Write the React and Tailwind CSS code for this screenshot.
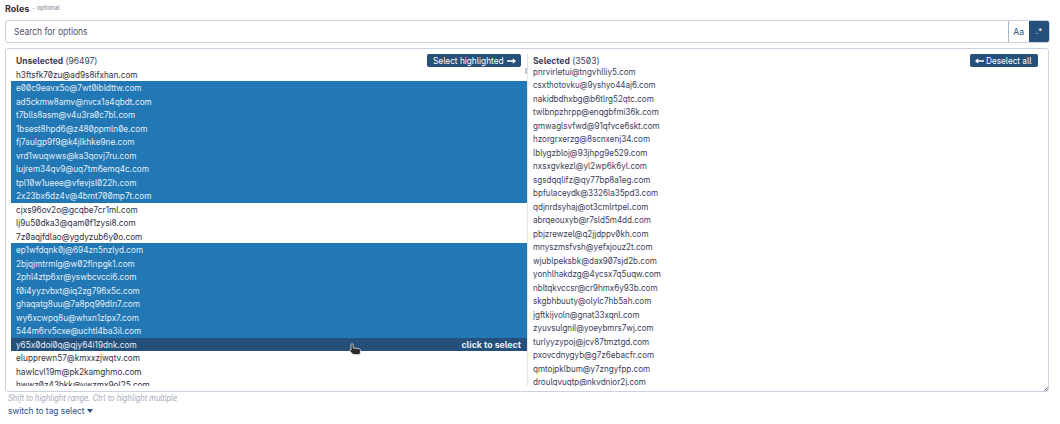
const unselected = [
  ['h3ftsfk70zu@ad9s8ifxhan.com', 0],
  ['e00c9eavx5o@7wt0ibldttw.com', 1],
  ['ad5ckmw8amv@nvcx1a4qbdt.com', 1],
  ['t7blls8asm@v4u3ra0c7bl.com', 1],
  ['1bsest8hpd6@z480ppmln0e.com', 1],
  ['fj7aulgp9f9@k4jlkhke9ne.com', 1],
  ['vrd1wuqwws@ka3qovj7ru.com', 1],
  ['lujrem34qv9@uq7tm6emq4c.com', 1],
  ['tpl10w1ueee@vfevjsl022h.com', 1],
  ['2x23bx6dz4v@4bmt700mp7t.com', 1],
  ['cjxs96ov2o@gcqbe7cr1ml.com', 0],
  ['lj9u50dka3@qam0f1zysi8.com', 0],
  ['7z0aqjfdlao@ygdyzub6y0o.com', 0],
  ['ep1wfdqnk0j@694zn5nzlyd.com', 1],
  ['2bjqjmtrmlg@w02flnpgk1.com', 1],
  ['2phl4ztp6xr@yswbcvcci6.com', 1],
  ['f0i4yyzvbxt@iq2zg796x5c.com', 1],
  ['ghaqatg8uu@7a8pq99dln7.com', 1],
  ['wy6xcwpq8u@whxn1zlpx7.com', 1],
  ['544m6rv5cxe@uchtl4ba3il.com', 1],
  ['y65x0doi0q@qjy64i19dnk.com', 2],
  ['elupprewn57@kmxxzjwqtv.com', 0],
  ['hawlcvl19m@pk2kamghmo.com', 0],
  ['hwwz0z43hkk@vwzmx9ol25.com', 0],
];

const selected = [
  'pnrvirletui@tngvhlliy5.com',
  'csxthotovku@9yshyo44aj6.com',
  'nakidbdhxbg@b6tlrg52qtc.com',
  'twlbnpzhrpp@enqgbfmi36k.com',
  'gmwaglsvfwd@91qfvce6skt.com',
  'hzorgrxerzg@8scnxenj34.com',
  'lblygzbloj@93jhpg9e529.com',
  'nxsxgvkezl@yl2wp6k6yl.com',
  'sgsdqqlifz@qy77bp8a1eg.com',
  'bpfulaceydk@3326la35pd3.com',
  'qdjnrdsyhaj@ot3cmlrtpel.com',
  'abrqeouxyb@r7sld5m4dd.com',
  'pbjzrewzel@q2jjdppv0kh.com',
  'mnyszmsfvsh@yefxjouz2t.com',
  'wjublpeksbk@dax907sjd2b.com',
  'yonhlhakdzg@4ycsx7q5uqw.com',
  'nbltqkvccsr@cr9hmx6y93b.com',
  'skgbhbuuty@olylc7hb5ah.com',
  'jgftkijvoln@gnat33xqnl.com',
  'zyuvsulgnil@yoeybmrs7wj.com',
  'turlyyzypoj@jcv87tmztgd.com',
  'pxovcdnygyb@g7z6ebacfr.com',
  'qmtojpklbum@y7zngyfpp.com',
  'droulqvuqtp@nkvdnior2j.com',
];

const rowStyles = [
  'text-[#2f3045]',
  'bg-[#2178b5] text-[#e3eef7]',
  'z-10 bg-[#25507a] text-[#e3eef7]',
];

const narrow = 'inline-block w-max origin-left whitespace-nowrap';

function Arrow({ left }) {
  return (
    <svg className={left ? 'h-2 w-[9px] shrink-0 rotate-180' : 'h-2 w-[9px] shrink-0'} viewBox="0 0 9 8" fill="currentColor">
      <path d="M0 3.3h5.8V1.3L9 4 5.8 6.7V4.7H0z" />
    </svg>
  );
}

function Pointer() {
  return (
    <svg className="absolute top-[5px] left-[338px] h-[13px] w-[13px]" viewBox="0 0 13 13">
      <path
        d="M3 .7c.8 0 1.2.5 1.2 1.2v3l5.6.8c1.2.2 1.8.8 1.7 2l-.5 3.9H4.2L.8 8.2c-.6-.8.4-1.7 1.2-1.1V1.9C2 1.2 2.3.7 3 .7z"
        fill="#2b2b2b"
        stroke="#e4e7ea"
        strokeWidth=".8"
      />
    </svg>
  );
}

export default function App() {
  return (
    <main className="h-[424px] w-[1060px] overflow-hidden bg-white pl-[5px] font-['Inter',sans-serif] text-[8.8px] leading-[13.5px] text-[#3a3e58] [font-feature-settings:'zero','cv05','calt'_0]">
      <div className="flex h-[20px] items-start pt-[2px]">
        <span className="text-[9px] font-bold text-[#2f3045]">Roles</span>
        <span className="ml-[3px] text-[6px] leading-[11px] text-[#777b94]">- optional</span>
      </div>

      <div className="flex h-[23px] w-[1045px] overflow-hidden rounded-[3px] border border-[#c9d2de]">
        <div className="flex flex-1 items-center pl-2 text-[9.2px] text-[#4e5269]">
          <span className="inline-block w-max origin-left scale-x-[0.92]">Search for options</span>
        </div>
        <div className="flex w-[21px] items-center justify-center border-l border-[#a9b9ca] text-[9px] text-[#25507a]">
          <span className="scale-x-[0.95]">Aa</span>
        </div>
        <div className="flex w-5 items-center justify-center bg-[#25507a] text-[8px] text-white">.*</div>
      </div>

      <section className="relative mt-[5px] flex h-[344px] w-[1044px] rounded-[3px] border border-[#c9d2de] pt-[5px] pb-[5px] pl-[5px]">
        <div className="flex w-[516px] flex-col">
          <header className="flex h-[13.5px] shrink-0 items-start justify-between pr-[6px] pl-[5px]">
            <h2 className={`${narrow} scale-x-[0.93] text-[9.1px] leading-[13px]`}><b>Unselected</b> (96497)</h2>
            <button className="flex h-[13px] w-[94px] items-center justify-between rounded-[2px] bg-[#25507a] pr-[5px] pl-[6px] text-[9px] leading-none text-white">
              <span className="w-[71px]"><span className="inline-block w-max origin-left scale-x-[0.92]">Select highlighted</span></span>
              <Arrow />
            </button>
          </header>
          <div className="relative min-h-0 flex-1 overflow-hidden">
            {unselected.map(([email, state]) => (
              <div key={email} className={`relative flex h-[13.5px] justify-between pr-[6px] pl-[5.3px] leading-[13px] ${rowStyles[state]}`}>
                <span className={`${narrow} scale-x-[0.935]`}>{email}</span>
                {state === 2 && <><Pointer /><b>click to select</b></>}
              </div>
            ))}
            <div className="absolute top-0 right-0 h-[6px] w-[2px] bg-[#c5c5c5]" />
          </div>
        </div>
        <div className="flex flex-1 flex-col border-l border-[#e4e6ea]">
          <header className="flex h-[10.5px] shrink-0 items-start justify-between pr-[10px] pl-[5px]">
            <h2 className={`${narrow} scale-x-[0.94] text-[9.1px] leading-[13px]`}><b>Selected</b> (3503)</h2>
            <button className="flex h-[13px] w-[68px] items-center gap-[2px] rounded-[2px] bg-[#25507a] pl-[5px] text-[9px] leading-none text-white">
              <Arrow left />
              <span className="inline-block w-max shrink-0 origin-left scale-x-[0.91]">Deselect all</span>
            </button>
          </header>
          <div className="min-h-0 flex-1 overflow-hidden pl-[5px] leading-[13px]">
            {selected.map((email) => (
              <div key={email} className="h-[13.5px]"><span className={`${narrow} scale-x-[0.917]`}>{email}</span></div>
            ))}
          </div>
        </div>
        <svg className="absolute right-0 bottom-0 h-[4px] w-[4px]" viewBox="0 0 4 4" stroke="#8b939d">
          <path d="M0 4 4 0M2 4 4 2" />
        </svg>
      </section>

      <p className="h-[12px] pl-[3px] text-[8.5px] leading-[13px] text-[#a5acbc] italic">
        <span className="inline-block w-max origin-left scale-x-[0.88]">Shift to highlight range. Ctrl to highlight multiple</span>
      </p>
      <div className="flex items-center pl-[3px] text-[9px] text-[#25507a]">
        <span className="w-[79px]"><span className="inline-block w-max origin-left scale-x-[0.925]">switch to tag select</span></span>
        <svg className="h-[4px] w-[6px]" viewBox="0 0 6 4" fill="currentColor"><path d="M0 0h6L3 4z" /></svg>
      </div>
    </main>
  );
}
